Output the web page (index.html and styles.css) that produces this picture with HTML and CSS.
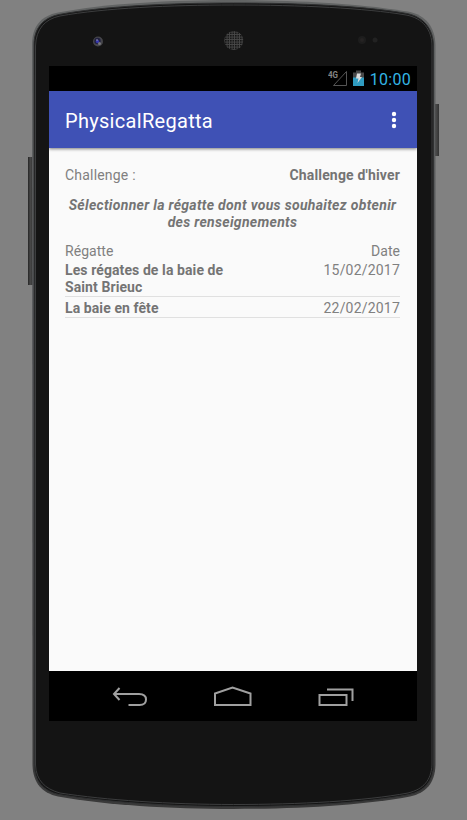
FILE: index.html
```html
<!DOCTYPE html>
<html lang="fr">
<head>
<meta charset="utf-8">
<title>PhysicalRegatta</title>
<link rel="stylesheet" href="styles.css">
</head>
<body>
<div class="device">
  <svg class="shell" width="467" height="820" viewBox="0 0 467 820" aria-hidden="true">
    <defs>
      <linearGradient id="key" x1="0" x2="1"><stop offset="0" stop-color="#252525"/><stop offset=".45" stop-color="#484848"/><stop offset="1" stop-color="#333"/></linearGradient>
      <linearGradient id="rim" x1="0" y1="0" x2="0" y2="1"><stop offset="0" stop-color="#626464"/><stop offset=".5" stop-color="#505154"/><stop offset="1" stop-color="#393939"/></linearGradient>
      <pattern id="mesh" width="2.500" height="2.500" patternUnits="userSpaceOnUse"><rect width="3" height="3" fill="#484848"/><rect width="1.600" height="1.600" fill="#151515"/></pattern>
      <path id="body" d="M32 45C32 26 41 16 58 12.500C105 3.500 170 0 233.500 0C300 0 365 4 408 11.500C426 15 435 27 435.500 45V765C435 783 426 793 410 796.500C365 805 300 809 233.500 809C170 809 105 805 58 796.500C42 793 33 783 32.500 765Z"/>
    </defs>
    <rect x="28" y="157" width="5" height="128" fill="url(#key)"/>
    <rect x="434" y="104" width="5" height="52" fill="url(#key)"/>
    <use href="#body" fill="url(#rim)"/>
    <path d="M34 45C34 28 43 18 59 14.500C105 6 170 3 233.500 3C300 3 365 6 407 13.500C424 17 433 29 433.500 45V765C433 781 425 791 409 794.500C365 803 300 806.500 233.500 806.500C170 806.500 105 802 59 794.500C43 791 34.500 781 34.500 765Z" fill="#141414" stroke="#303132"/>
    <path d="M35.500 46C36 29 45 19 60 16C105 8 170 5 233.500 5C300 5 365 8 406 15C423 18 432 30 432 46V765C431 780 424 789 408 793C365 801 300 804.500 233.500 804.500C170 804.500 105 800 60 793C45 789 36 780 35.500 765Z" fill="#141414" stroke="#3c3d3e"/>
    <circle cx="98" cy="41.500" r="5" fill="#45454a"/>
    <circle cx="97.500" cy="41" r="3.200" fill="#202040"/>
    <circle cx="97.500" cy="41.500" r="1.700" fill="#3535aa"/>
    <circle cx="99.500" cy="43.500" r="1.500" fill="#77777a"/>
    <circle cx="97" cy="40" r=".7" fill="#bbc"/>
    <circle cx="233.800" cy="40.500" r="9.500" fill="url(#mesh)"/>
    <circle cx="362" cy="40" r="4" fill="#1d1d1d"/><circle cx="362" cy="40" r="2" fill="#252323"/>
    <circle cx="375" cy="40" r="2.500" fill="#222"/>
  </svg>
  <main class="screen">
    <div class="status">
      <svg width="40" height="25" viewBox="0 0 40 25" aria-hidden="true">
        <path d="M5.500 19.500H18.500V5.500Z" fill="none" stroke="#555"/>
        <path d="M25 6.500H28V4.500H33V6.500H36V12H25Z" fill="#484848"/>
        <path d="M25 11.500H36V20H25Z" fill="#2f9bc0"/>
        <path d="M29 7.500H33L32 11H34L29.500 17L30.500 12.500H28Z" fill="#ddd"/>
        <text class="net" x="0" y="12" textLength="10" lengthAdjust="spacingAndGlyphs">4G</text>
      </svg>
      <span class="clock">10:00</span>
    </div>
    <header class="appbar">
      <h1>PhysicalRegatta</h1>
      <svg width="6" height="20" viewBox="0 0 6 20" fill="#fff" aria-label="Menu"><circle cx="3" cy="4" r="2.200"/><circle cx="3" cy="10" r="2.200"/><circle cx="3" cy="16" r="2.200"/></svg>
    </header>
    <section class="content">
      <div class="row challenge"><span>Challenge :</span><b class="hiver">Challenge d'hiver</b></div>
      <p class="hint">Sélectionner la régatte dont vous souhaitez obtenir<br>des renseignements</p>
      <div class="row head"><span>Régatte</span><span>Date</span></div>
      <div class="row race"><b>Les régates de la baie de<br>Saint Brieuc</b><span class="date">15/02/2017</span></div>
      <div class="row race"><b>La baie en fête</b><span class="date">22/02/2017</span></div>
    </section>
    <nav class="navbar">
      <svg width="368" height="50" viewBox="0 0 368 50" fill="none" stroke="#a0a0a0" stroke-width="2" aria-hidden="true">
        <path d="M70.500 17L65 23L70.500 29M65.500 23H90C95.500 23 97 25.500 97 28.500C97 32.500 95 34 90.500 34H79.500"/>
        <path d="M166 34V22.500L183.500 16.500L201.500 22.500V34Z"/>
        <path d="M270.500 24H297.500V34H270.500ZM278 18.500H303.500V30"/>
      </svg>
    </nav>
  </main>
</div>
</body>
</html>
```
FILE: styles.css
```css
* { box-sizing: border-box; }
body { margin: 0; background: #818181; font-family: Roboto, sans-serif; }
.device { position: relative; width: 467px; height: 820px; padding: 66px 50px 99px 49px; overflow: hidden; }
.shell { position: absolute; inset: 0; }
.screen { position: relative; width: 368px; height: 655px; display: flex; flex-direction: column; background: #fafafa; color: #808080; font-size: 14px; line-height: 17px; }
.status { height: 25px; flex: none; display: flex; align-items: center; justify-content: flex-end; padding-right: 6px; background: #000; }
.status svg { margin-right: 2px; }
.net { font: 700 9px Roboto, sans-serif; fill: #858585; }
.clock { padding-top: 1px; font-size: 16px; line-height: 25px; letter-spacing: .3px; color: #33b5e5; }
.appbar { height: 57px; flex: none; display: flex; align-items: center; justify-content: space-between; padding: 0 20px 0 16px; background: #3f51b5; box-shadow: 0 1px 3px rgba(0,0,0,.5); clip-path: inset(0 0 -8px 0); }
h1 { margin: 0; padding-top: 2px; font-size: 20px; line-height: 26px; font-weight: 400; letter-spacing: .3px; color: #fff; }
.content { flex: 1; padding: 19px 17px 0 16px; }
.row { display: flex; justify-content: space-between; }
.row b { color: #747474; letter-spacing: .09px; }
.challenge { height: 30px; letter-spacing: .2px; }
.row .hiver { letter-spacing: .17px; }
.hint { margin: 0; height: 46px; text-align: center; color: #747474; font-weight: 700; font-style: italic; letter-spacing: .31px; line-height: 16.5px; }
.head { height: 19px; letter-spacing: .05px; }
.race { margin-bottom: 3px; border-bottom: 1px solid #e0e0e0; }
.date { letter-spacing: .2px; }
.navbar { height: 50px; flex: none; background: #000; }
.navbar svg { display: block; }
```
